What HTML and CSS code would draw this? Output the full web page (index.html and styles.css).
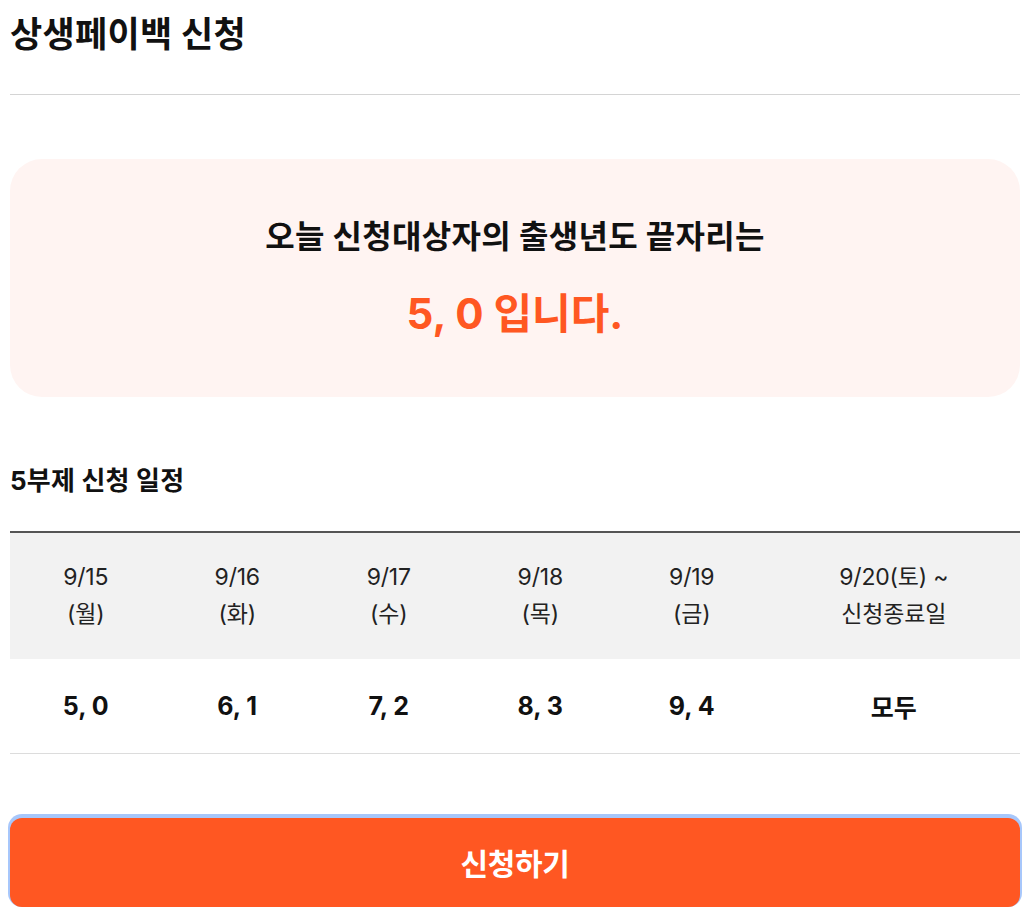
FILE: index.html
```html
<!DOCTYPE html>
<html lang="ko">
<head>
<meta charset="utf-8">
<link rel="stylesheet" href="styles.css">
</head>
<body>
<div class="page">
  <h1 class="title">상생페이백 신청</h1>
  <hr class="divider">
  <section class="notice">
    <p class="notice-line">오늘 신청대상자의 출생년도 끝자리는</p>
    <p class="notice-num">5, 0 입니다.</p>
  </section>
  <h2 class="sub">5부제 신청 일정</h2>
  <table class="sched">
    <thead>
      <tr>
        <th>9/15<br>(월)</th>
        <th>9/16<br>(화)</th>
        <th>9/17<br>(수)</th>
        <th>9/18<br>(목)</th>
        <th>9/19<br>(금)</th>
        <th class="last">9/20(토) ~<br>신청종료일</th>
      </tr>
    </thead>
    <tbody>
      <tr>
        <td>5, 0</td>
        <td>6, 1</td>
        <td>7, 2</td>
        <td>8, 3</td>
        <td>9, 4</td>
        <td>모두</td>
      </tr>
    </tbody>
  </table>
  <button class="apply">신청하기</button>
</div>
</body>
</html>
```

FILE: styles.css
```css
* { box-sizing: border-box; }
html, body { margin: 0; padding: 0; background: #fff; }
body {
  font-family: "Inter", "Noto Sans CJK KR", "Noto Sans", sans-serif;
  color: #111;
  overflow: hidden;
}
.page {
  padding: 0 4px 0 10px;
  display: flex;
  flex-direction: column;
}
.title {
  margin: 11px 0 0;
  font-size: 35px;
  font-weight: 700;
  line-height: 46px;
  letter-spacing: 0.3px;
}
.divider {
  margin: 37px 0 0;
  border: 0;
  border-top: 1px solid #d4d4d4;
  height: 0;
}
.notice {
  margin-top: 64px;
  height: 238px;
  background: #fff4f2;
  border-radius: 32px;
  display: flex;
  flex-direction: column;
  align-items: center;
  padding-top: 58px;
}
.notice p { margin: 0; }
.notice-line {
  font-size: 32px;
  font-weight: 700;
  line-height: 40px;
  letter-spacing: 0.3px;
}
.notice-num {
  margin-top: 34px !important;
  font-size: 42px;
  font-weight: 700;
  line-height: 46px;
  color: #ff5722;
  letter-spacing: 0;
}
.sub {
  margin: 68px 0 0;
  font-size: 26px;
  font-weight: 700;
  line-height: 32px;
  letter-spacing: 0.2px;
}
.sched {
  margin-top: 34px;
  width: 100%;
  border-collapse: collapse;
  table-layout: fixed;
  border-top: 2px solid #555;
  border-bottom: 1px solid #dcdcdc;
}
.sched th {
  width: 15%;
  background: #f2f2f2;
  font-weight: 400;
  font-size: 23px;
  line-height: 37px;
  height: 127px;
  padding: 0;
  color: #222;
  letter-spacing: -0.2px;
}
.sched th.last { width: 25%; }
.sched td {
  height: 94px;
  text-align: center;
  font-size: 25px;
  font-weight: 700;
  padding: 0;
  color: #111;
}
.apply {
  margin-top: 64px;
  height: 89px;
  width: 100%;
  border: 0;
  border-radius: 12px;
  background: #ff5722;
  color: #fff;
  font-family: inherit;
  font-size: 30px;
  font-weight: 700;
  letter-spacing: -0.3px;
  box-shadow: 0 -2px 0 2px #a7c7fb;
}
```
